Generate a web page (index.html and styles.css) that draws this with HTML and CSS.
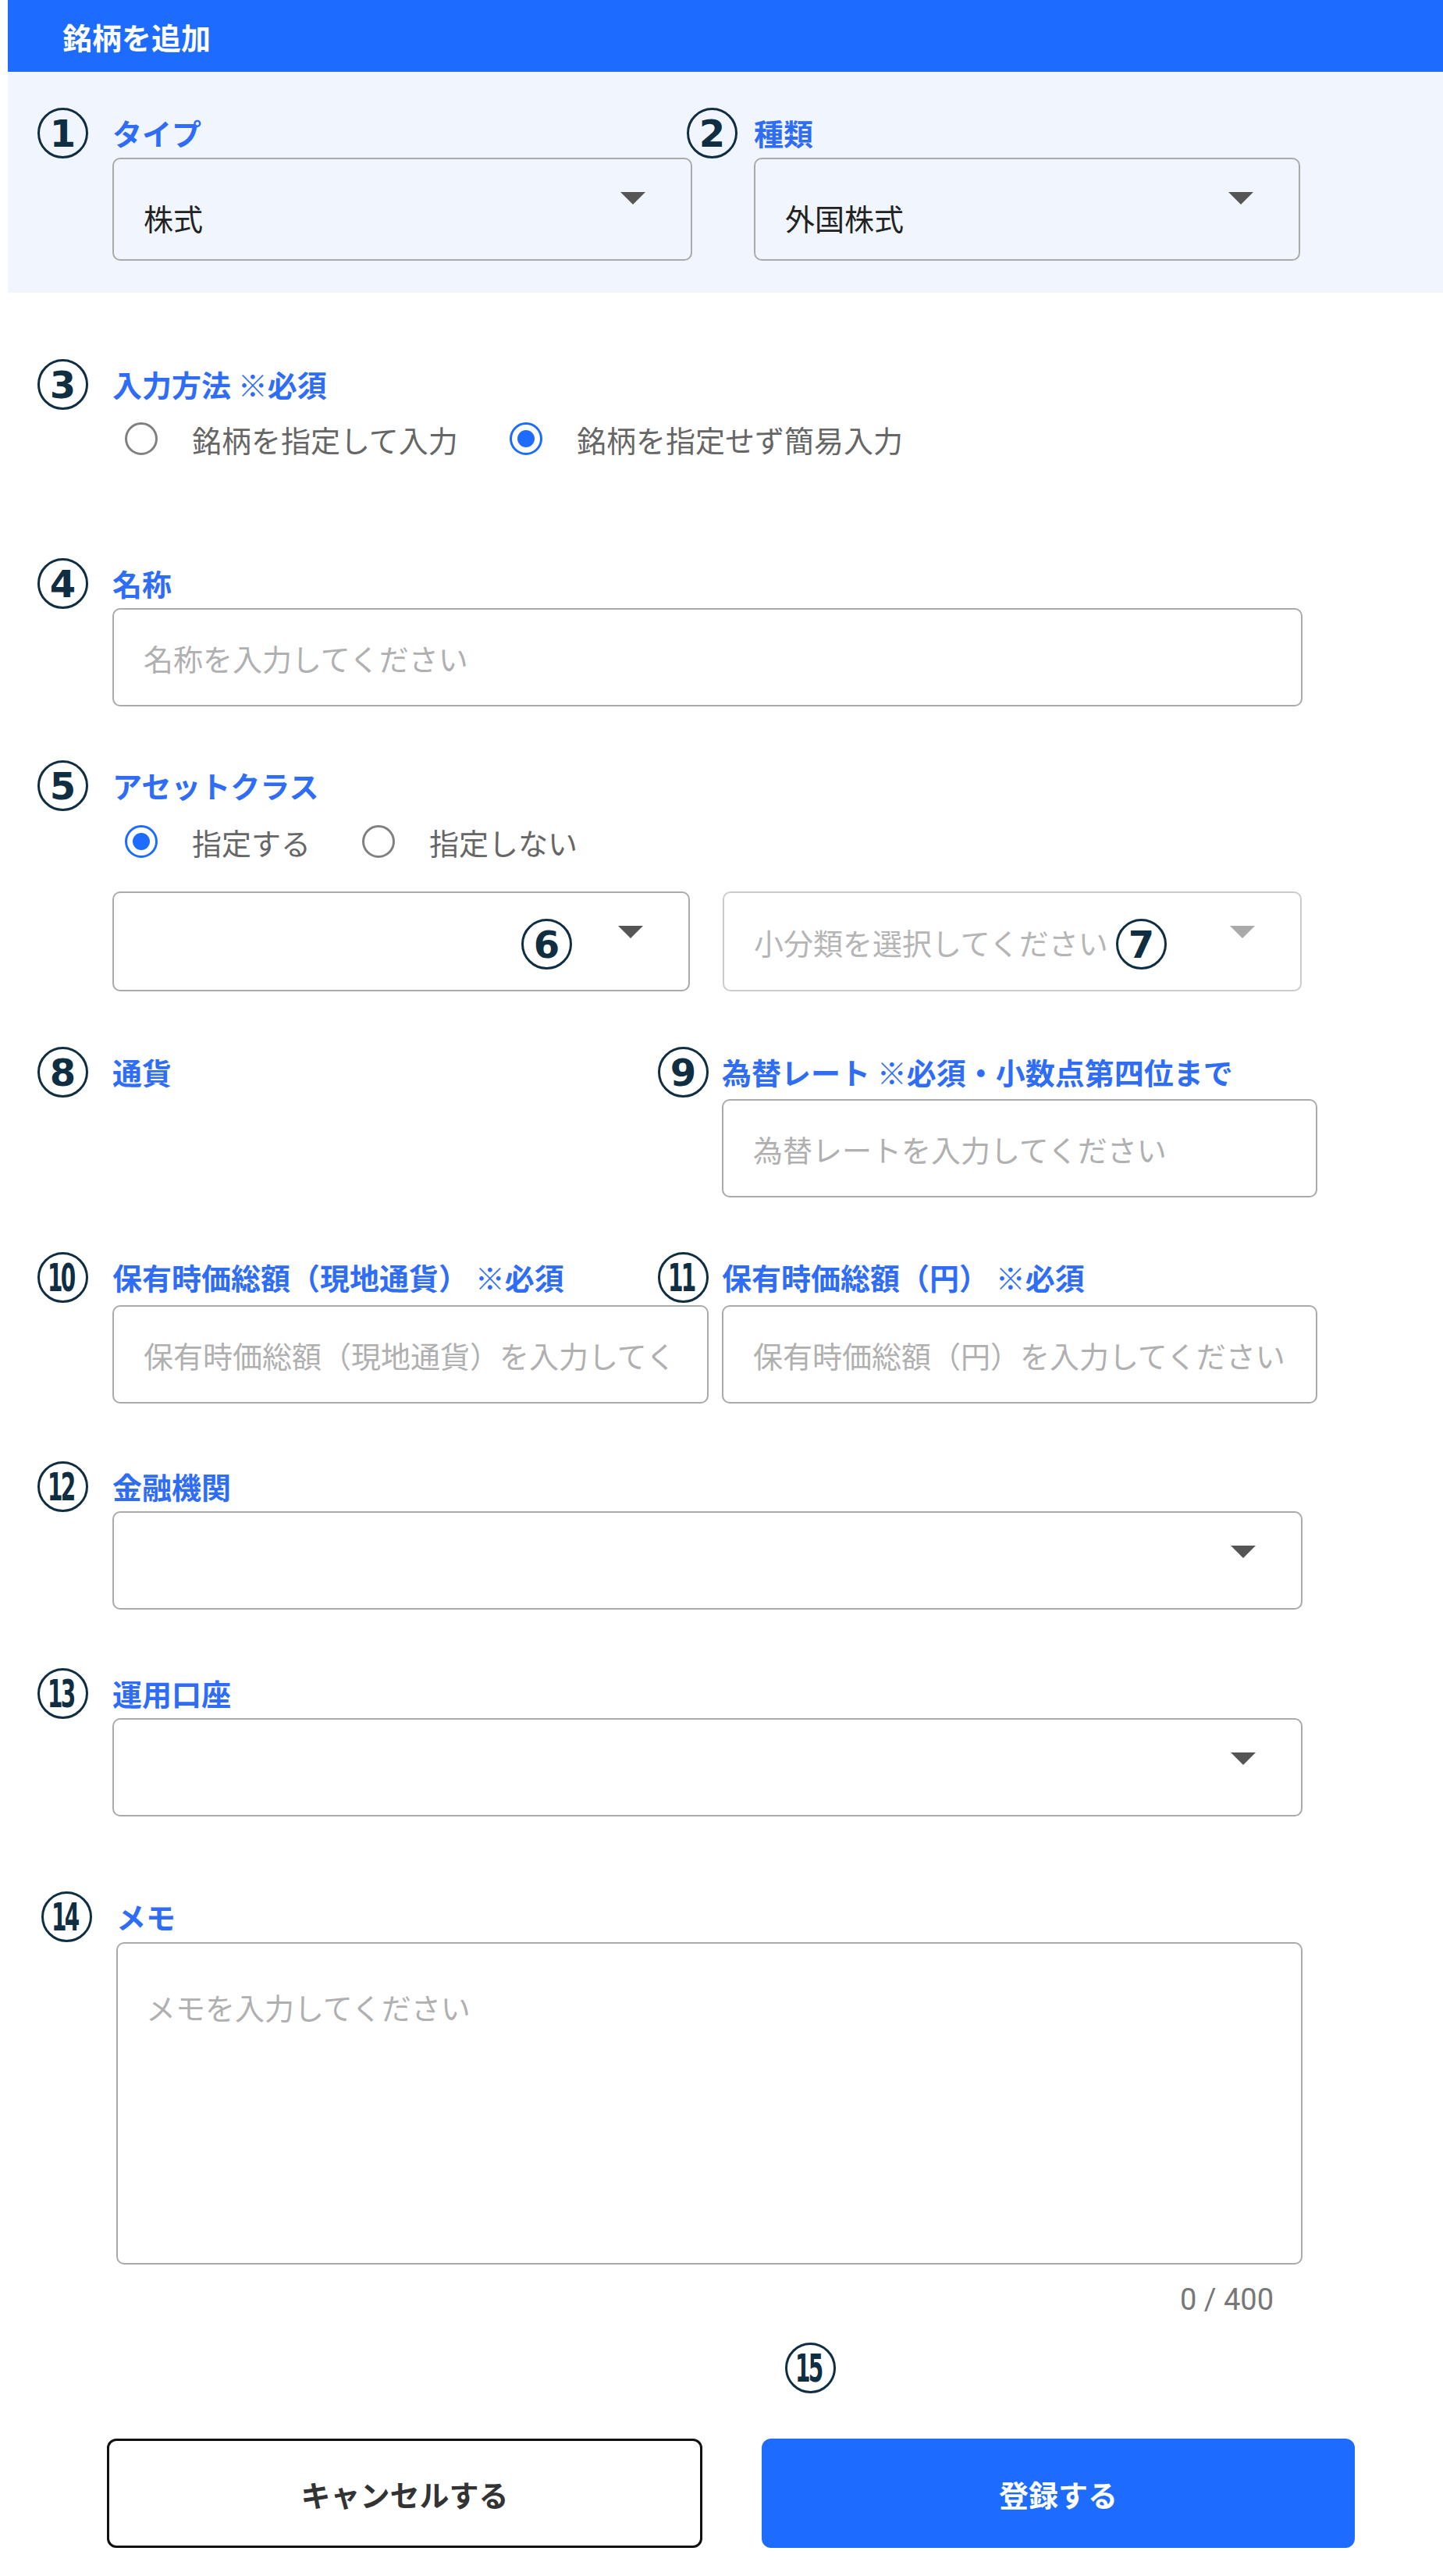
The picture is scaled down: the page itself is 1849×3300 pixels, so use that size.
FILE: index.html
```html
<!DOCTYPE html>
<html lang="ja">
<head>
    <meta charset="UTF-8">
    <meta name="viewport" content="width=device-width, initial-scale=1.0">
    <title>銘柄を追加</title>
    <link rel="stylesheet" href="styles.css">
</head>
<body>
    <div class="modal">
        <header class="modal-header">銘柄を追加</header>

        <!-- タイプ / 種類 -->
        <section class="basic">
            <div class="field">
                <div class="field-head">
                    <span class="num">1</span>
                    <label class="label">タイプ</label>
                </div>
                <div class="select select-top">株式</div>
            </div>
            <div class="field">
                <div class="field-head">
                    <span class="num num-r1">2</span>
                    <label class="label">種類</label>
                </div>
                <div class="select select-top">外国株式</div>
            </div>
        </section>

        <div class="form-body">
            <!-- 入力方法 -->
            <div class="field method">
                <div class="field-head">
                    <span class="num">3</span>
                    <label class="label">入力方法 ※必須</label>
                </div>
                <div class="radio-group method-radios">
                    <label class="radio"><span class="radio-mark"></span>銘柄を指定して入力</label>
                    <label class="radio"><span class="radio-mark on"></span>銘柄を指定せず簡易入力</label>
                </div>
            </div>

            <!-- 名称 -->
            <div class="field name">
                <div class="field-head">
                    <span class="num">4</span>
                    <label class="label">名称</label>
                </div>
                <input class="input" type="text" placeholder="名称を入力してください">
            </div>

            <!-- アセットクラス -->
            <div class="field asset">
                <div class="field-head">
                    <span class="num">5</span>
                    <label class="label">アセットクラス</label>
                </div>
                <div class="radio-group asset-radios">
                    <label class="radio"><span class="radio-mark on"></span>指定する</label>
                    <label class="radio"><span class="radio-mark"></span>指定しない</label>
                </div>
                <div class="asset-selects">
                    <div class="select">
                        <span class="num num-in num-6">6</span>
                    </div>
                    <div class="select disabled">
                        <span class="placeholder">小分類を選択してください</span>
                        <span class="num num-in num-7">7</span>
                    </div>
                </div>
            </div>

            <!-- 通貨 / 為替レート -->
            <div class="pair rate-row">
                <div class="field">
                    <div class="field-head">
                        <span class="num">8</span>
                        <label class="label">通貨</label>
                    </div>
                </div>
                <div class="field">
                    <div class="field-head">
                        <span class="num num-r2">9</span>
                        <label class="label">為替レート ※必須・小数点第四位まで</label>
                    </div>
                    <input class="input input-pair" type="text" placeholder="為替レートを入力してください">
                </div>
            </div>

            <!-- 保有時価総額 -->
            <div class="pair value-row">
                <div class="field">
                    <div class="field-head">
                        <span class="num"><span class="two">10</span></span>
                        <label class="label">保有時価総額（現地通貨）&nbsp;※必須</label>
                    </div>
                    <input class="input input-pair" type="text" placeholder="保有時価総額（現地通貨）を入力してください">
                </div>
                <div class="field">
                    <div class="field-head">
                        <span class="num num-r2"><span class="two">11</span></span>
                        <label class="label">保有時価総額（円）&nbsp;※必須</label>
                    </div>
                    <input class="input input-pair" type="text" placeholder="保有時価総額（円）を入力してください">
                </div>
            </div>

            <!-- 金融機関 -->
            <div class="field bank">
                <div class="field-head">
                    <span class="num"><span class="two">12</span></span>
                    <label class="label">金融機関</label>
                </div>
                <div class="select"></div>
            </div>

            <!-- 運用口座 -->
            <div class="field account">
                <div class="field-head">
                    <span class="num"><span class="two">13</span></span>
                    <label class="label">運用口座</label>
                </div>
                <div class="select"></div>
            </div>

            <!-- メモ -->
            <div class="field memo">
                <div class="field-head">
                    <span class="num"><span class="two">14</span></span>
                    <label class="label">メモ</label>
                </div>
                <textarea class="textarea" placeholder="メモを入力してください"></textarea>
            </div>
            <div class="counter">0 / 400</div>

            <div class="marker-row">
                <span class="num num-static"><span class="two">15</span></span>
            </div>

            <div class="actions">
                <button class="btn btn-cancel" type="button">キャンセルする</button>
                <button class="btn btn-submit" type="submit">登録する</button>
            </div>
        </div>
    </div>
</body>
</html>
```

FILE: styles.css
```css
* {
    box-sizing: border-box;
}

body {
    margin: 0;
    font-family: "Noto Sans CJK JP", "Noto Sans", sans-serif;
    color: #333;
    background: #fff;
}

.modal {
    margin-left: 10px;
}

.modal-header {
    height: 92px;
    background: #1e6cff;
    color: #fff;
    display: flex;
    align-items: center;
    padding-left: 70px;
    font-size: 38px;
    font-weight: 700;
}

/* top block */
.basic {
    background: #f1f6fe;
    padding: 46px 0 41px 134px;
    display: grid;
    grid-template-columns: 743px 700px;
    column-gap: 79px;
}

.form-body {
    padding-left: 134px;
    padding-bottom: 27px;
}

.field {
    position: relative;
}

.field-head {
    height: 64px;
    display: flex;
    align-items: center;
}

.label {
    color: #2f6df6;
    font-size: 38px;
    font-weight: 700;
    line-height: 1;
    white-space: nowrap;
}

/* circled numbers */
.num {
    position: absolute;
    left: -96px;
    top: 0;
    width: 65px;
    height: 65px;
    border: 3px solid #0f2e42;
    border-radius: 50%;
    display: flex;
    align-items: center;
    justify-content: center;
    font-family: "DejaVu Sans", sans-serif;
    font-weight: 700;
    font-size: 48px;
    line-height: 1;
    color: #0f2e42;
    background: #fff;
}

.basic .num {
    background: transparent;
}

.num .two {
    display: inline-block;
    font-size: 50px;
    letter-spacing: -5px;
    transform: scaleX(0.56);
    margin-left: -5px;
}

.num-r1 {
    left: -86px;
}

.num-r2 {
    left: -82px;
}

.num-in {
    top: 33px;
    left: auto;
}

.num-6 {
    right: 149px;
}

.num-7 {
    right: 171px;
}

.num-static {
    position: static;
}

/* controls */
.select,
.input,
.textarea {
    width: 100%;
    border: 2px solid #aaa;
    border-radius: 10px;
    background: #fff;
    font-family: inherit;
    font-size: 38px;
    color: #222;
}

.select {
    position: relative;
    height: 126px;
    display: flex;
    align-items: center;
    padding-left: 38px;
}

.select::after {
    content: "";
    position: absolute;
    right: 58px;
    top: 42px;
    width: 0;
    height: 0;
    border-left: 16px solid transparent;
    border-right: 16px solid transparent;
    border-top: 16px solid #555;
}

.select-top {
    height: 132px;
    background: transparent;
    padding-top: 20px;
}

.select.disabled {
    border-color: #ccc;
}

.select.disabled::after {
    border-top-color: #aaa;
}

.placeholder {
    color: #b5b5b5;
}

.input {
    display: block;
    height: 126px;
    padding: 0 38px;
}

.input::placeholder,
.textarea::placeholder {
    color: #b0b0b0;
}

.textarea {
    display: block;
    height: 413px;
    padding: 52px 36px;
    line-height: 1.5;
    resize: none;
}

/* radios */
.radio-group {
    display: flex;
    gap: 66px;
    padding-left: 16px;
}

.radio {
    display: flex;
    align-items: center;
    gap: 44px;
    height: 42px;
    font-size: 38px;
    color: #666;
    white-space: nowrap;
}

.radio-mark {
    position: relative;
    width: 42px;
    height: 42px;
    border: 3px solid #808080;
    border-radius: 50%;
}

.radio-mark.on {
    border-color: #1e6cff;
}

.radio-mark.on::after {
    content: "";
    position: absolute;
    left: 7px;
    top: 7px;
    width: 22px;
    height: 22px;
    border-radius: 50%;
    background: #1e6cff;
}

/* vertical rhythm */
.method {
    margin-top: 85px;
}

.method-radios {
    margin-top: 17px;
}

.name {
    margin-top: 132px;
    width: 1525px;
}

.asset {
    margin-top: 69px;
}

.asset-radios {
    margin-top: 19px;
}

.asset-selects {
    margin-top: 43px;
    display: grid;
    grid-template-columns: 740px 742px;
    column-gap: 42px;
}

.asset-selects .select {
    height: 128px;
}

.pair {
    display: grid;
    grid-template-columns: 764px 763px;
    column-gap: 17px;
}

.rate-row {
    margin-top: 71px;
}

.rate-row .input-pair {
    margin-top: 3px;
}

.value-row {
    margin-top: 70px;
}

.value-row .input-pair {
    margin-top: 4px;
}

.bank {
    margin-top: 74px;
    width: 1525px;
}

.account {
    margin-top: 75px;
    width: 1525px;
}

.memo {
    margin-top: 96px;
    margin-left: 5px;
    width: 1520px;
}

.memo .textarea {
    margin-top: 1px;
}

.counter {
    width: 1525px;
    margin-top: 22px;
    padding-right: 37px;
    text-align: right;
    font-family: Roboto, "Noto Sans", sans-serif;
    font-size: 38px;
    line-height: 46px;
    color: #777;
}

.marker-row {
    margin-top: 32px;
    padding-left: 862px;
}

/* buttons */
.actions {
    margin-top: 58px;
    margin-left: -7px;
    display: flex;
    gap: 76px;
}

.btn {
    width: 763px;
    height: 140px;
    border-radius: 12px;
    font-family: inherit;
    font-size: 38px;
    font-weight: 700;
    cursor: pointer;
}

.btn-cancel {
    background: #fff;
    border: 3px solid #111;
    color: #333;
}

.btn-submit {
    width: 760px;
    background: #1e6cff;
    border: none;
    color: #fff;
}
```
